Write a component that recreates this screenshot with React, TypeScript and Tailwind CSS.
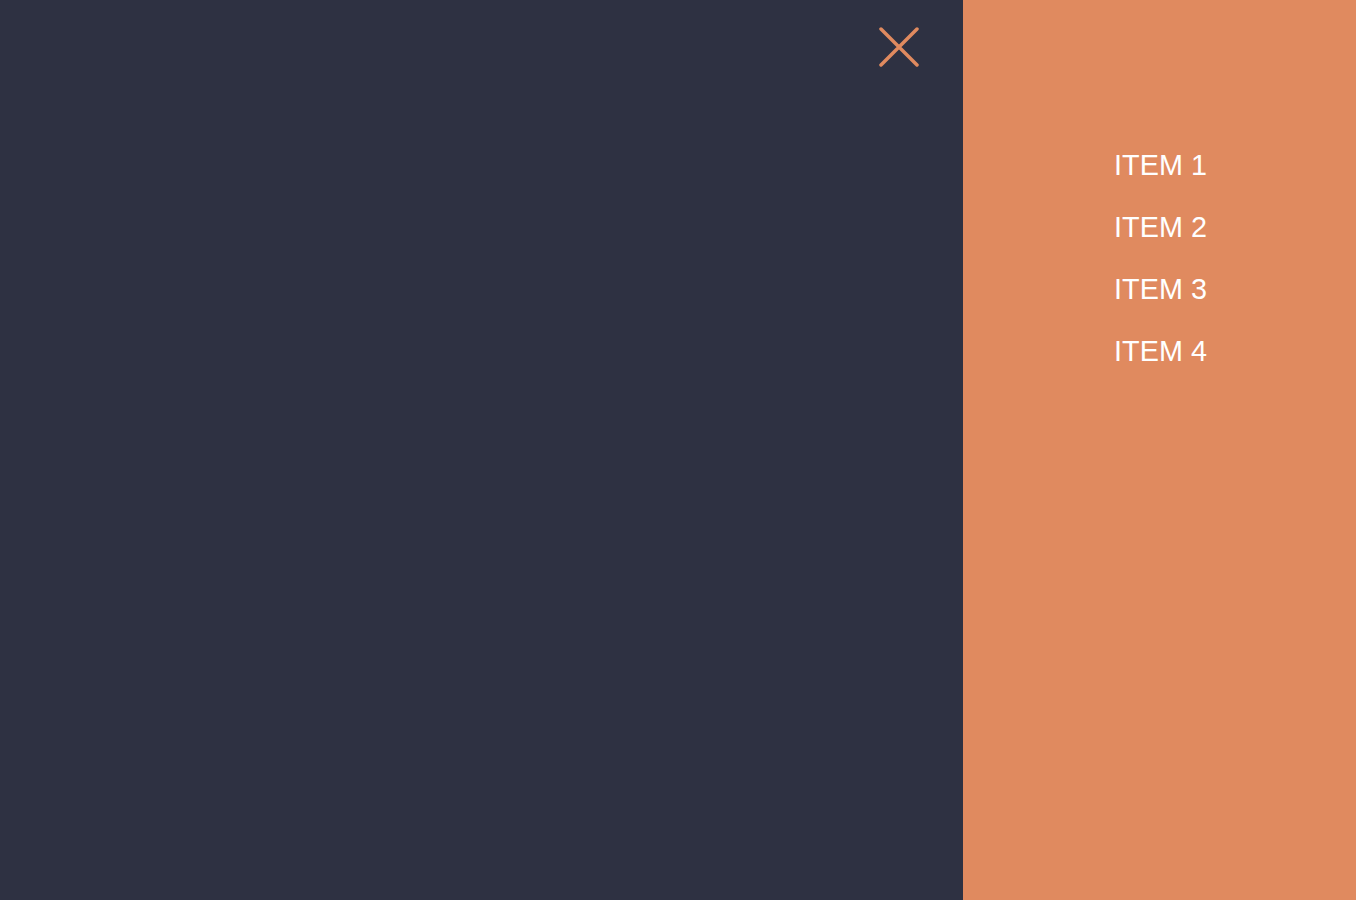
const items = ["ITEM 1", "ITEM 2", "ITEM 3", "ITEM 4"]

export default function App() {
  return (
    <div className="flex h-[900px] w-full bg-[#2e3142] font-['Liberation_Sans',Arial,sans-serif]">
      <div className="flex flex-1 justify-end pr-[44px] pt-[27px]">
        <button className="h-[40px] w-[40px]">
          <svg viewBox="0 0 40 40" className="h-[40px] w-[40px]">
            <path
              d="M2 2L38 38M38 2L2 38"
              stroke="#e08a5f"
              strokeWidth={3.5}
              strokeLinecap="round"
            />
          </svg>
        </button>
      </div>
      <nav className="w-[393px] bg-[#e08a5f] pt-[134px]">
        <ul className="flex flex-col items-center">
          {items.map((item) => (
            <li
              key={item}
              className="flex h-[62px] items-center pl-[2px] text-[28.8px] leading-none text-white"
            >
              {item}
            </li>
          ))}
        </ul>
      </nav>
    </div>
  )
}
